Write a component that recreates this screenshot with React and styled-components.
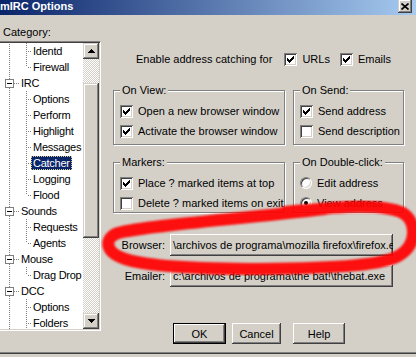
import React from "react";
import styled, { createGlobalStyle, css } from "styled-components";

const Global = createGlobalStyle`
  html, body { margin: 0; padding: 0; background: #d4d0c8; }
  body { font-family: "Liberation Sans", Arial, sans-serif; font-size: 11px; color: #000; }
  * { box-sizing: border-box; }
`;

const raised = css`
  background: #d4d0c8;
  box-shadow: inset -1px -1px #404040, inset 1px 1px #ffffff, inset -2px -2px #808080, inset 2px 2px #d4d0c8;
`;

const Window = styled.div`
  position: relative;
  width: 416px;
  height: 357px;
  background: #d4d0c8;
  display: flex;
  flex-direction: column;
  overflow: hidden;
`;

const TitleBar = styled.div`
  height: 15px;
  flex: none;
  display: flex;
  align-items: flex-start;
  justify-content: space-between;
  background: linear-gradient(to right, #0a246a, #a6caf0);
`;

const TitleText = styled.span`
  color: #fff;
  font-weight: bold;
  font-size: 11px;
  line-height: 13px;
`;

const CloseButton = styled.span`
  width: 14px;
  height: 14px;
  margin-top: -1px;
  margin-right: 4px;
  display: flex;
  align-items: center;
  justify-content: center;
  background: #d4d0c8;
  box-shadow: inset -1px -1px #404040, inset 1px 1px #d4d0c8, inset -2px -2px #808080, inset 2px 2px #ffffff;
`;

const Body = styled.div`
  flex: 1;
  display: flex;
  min-height: 0;
`;

const LeftPane = styled.div`
  width: 101px;
  flex: none;
  padding-top: 11px;
  display: flex;
  flex-direction: column;
`;

const CategoryLabel = styled.div`
  line-height: 13px;
  padding-left: 3px;
  margin-bottom: 2px;
`;

const TreeFrame = styled.div`
  margin-left: -2px;
  width: 103px;
  height: 290px;
  display: flex;
  border: 1px solid;
  border-color: #808080 #ffffff #ffffff #808080;
  padding: 1px;
  background: #d4d0c8;
  box-shadow: inset 1px 1px #404040, inset -1px -1px #d4d0c8;
`;

const TreeList = styled.div`
  flex: 1;
  overflow: hidden;
  letter-spacing: -0.25px;
  background: linear-gradient(#808080 50%, transparent 50%) 9px 1px / 1px 2px repeat-y, #ffffff;
`;

const Row = styled.div`
  display: flex;
  align-items: center;
  height: 16px;
`;

const Expander = styled.span`
  width: 9px;
  height: 9px;
  margin-left: 5px;
  flex: none;
  border: 1px solid #808080;
  background: #fff;
  display: flex;
  align-items: center;
  justify-content: center;
`;

const Minus = styled.span`
  width: 5px;
  height: 1px;
  background: #000;
`;

const Dash = styled.span`
  width: 5px;
  flex: none;
  height: 1px;
  background: linear-gradient(to right, #808080 50%, transparent 50%) 0 0 / 2px 1px repeat-x;
`;

const Branch = styled.span`
  position: relative;
  width: 5px;
  height: 16px;
  margin-left: 26px;
  flex: none;
  &::before {
    content: "";
    position: absolute;
    left: 0;
    top: 0;
    width: 1px;
    height: ${(p) => (p.$last ? 8 : 16)}px;
    background: linear-gradient(#808080 50%, transparent 50%) 0 0 / 1px 2px repeat-y;
  }
  &::after {
    content: "";
    position: absolute;
    left: 1px;
    top: 8px;
    width: 4px;
    height: 1px;
    background: linear-gradient(to right, transparent 50%, #808080 50%) 0 0 / 2px 1px repeat-x;
  }
`;

const NodeLabel = styled.span`
  height: 14px;
  line-height: 14px;
  padding: 0 2px;
  white-space: nowrap;
  ${(p) =>
    p.$selected &&
    css`
      background: #0a246a;
      color: #fff;
      outline: 1px dotted #d8cc90;
      outline-offset: -1px;
    `}
`;

const ScrollBar = styled.div`
  width: 16px;
  flex: none;
  display: flex;
  flex-direction: column;
  background: repeating-conic-gradient(#d4d0c8 0 25%, #ffffff 0 50%) 0 0 / 2px 2px;
`;

const ScrollButton = styled.div`
  width: 16px;
  height: ${(p) => p.$h || 16}px;
  flex: none;
  display: flex;
  align-items: center;
  justify-content: center;
  background: #d4d0c8;
  box-shadow: inset -1px -1px #404040, inset 1px 1px #d4d0c8, inset -2px -2px #808080, inset 2px 2px #ffffff;
`;

const Track = styled.div`
  flex: 1;
  padding-top: 24px;
`;

const RightPane = styled.div`
  flex: 1;
  padding: 36px 0 0 12px;
  display: flex;
  flex-direction: column;
`;

const EnableRow = styled.div`
  display: flex;
  align-items: center;
  height: 16px;
  margin-left: 23px;
  gap: 10px;
`;

const EnableText = styled.span`
  margin-right: 2px;
  white-space: nowrap;
`;

const Option = styled.label`
  display: flex;
  align-items: center;
  gap: 5px;
  height: 16px;
  white-space: nowrap;
`;

const CheckBox = styled.span`
  width: 13px;
  height: 13px;
  flex: none;
  display: flex;
  background: #fff;
  box-shadow: inset 1px 1px #808080, inset -1px -1px #ffffff, inset 2px 2px #404040, inset -2px -2px #d4d0c8;
`;

const Radio = styled.span`
  width: 12px;
  height: 12px;
  flex: none;
  border-radius: 50%;
  background: #fff;
  border: 1px solid;
  border-color: #808080 #ffffff #ffffff #808080;
  box-shadow: inset 1px 1px #404040, inset -1px -1px #d4d0c8;
  display: flex;
  align-items: center;
  justify-content: center;
`;

const Dot = styled.span`
  width: 4px;
  height: 4px;
  border-radius: 50%;
  background: #000;
`;

const GroupGrid = styled.div`
  display: grid;
  grid-template-columns: 172px 111px;
  column-gap: 8px;
  row-gap: 11px;
  margin-top: 17px;
`;

const Group = styled.fieldset`
  margin: 0;
  min-width: 0;
  border: 1px solid #808080;
  box-shadow: 1px 1px 0 #ffffff, inset 1px 1px 0 #ffffff;
  padding: 6px 6px ${(p) => p.$pb}px;
  display: flex;
  flex-direction: column;
  gap: 4px;
`;

const Caption = styled.legend`
  padding: 0 2px;
  line-height: 13px;
  background: #d4d0c8;
`;

const PathGrid = styled.div`
  display: grid;
  grid-template-columns: 52px 223px;
  column-gap: 5px;
  row-gap: 9px;
  margin-top: 21px;
  align-items: center;
`;

const PathLabel = styled.span`
  text-align: right;
  white-space: nowrap;
`;

const PathField = styled.div`
  height: 22px;
  line-height: 22px;
  padding: 0 3px;
  white-space: nowrap;
  overflow: hidden;
  ${raised};
`;

const ButtonRow = styled.div`
  display: flex;
  margin-top: 36px;
  padding-left: 60px;
`;

const Button = styled.button`
  width: ${(p) => p.$w}px;
  height: 21px;
  margin: 0 0 0 ${(p) => p.$ml || 0}px;
  padding: 0;
  font: inherit;
  color: #000;
  border: none;
  ${raised};
  ${(p) =>
    p.$default &&
    css`
      border: 1px solid #000;
      box-shadow: inset -1px -1px #404040, inset 1px 1px #ffffff, inset -2px -2px #808080;
    `}
`;

const WindowEdge = styled.div`
  height: 5px;
  flex: none;
  border-top: 1px solid #808080;
  box-shadow: inset 0 1px #404040;
`;

const Scribble = styled.svg`
  position: absolute;
  left: 0;
  top: 0;
  pointer-events: none;
`;

const Check = () => {
  const tops = [5, 6, 7, 6, 5, 4, 3];
  const d = tops.map((y, i) => `M${3 + i} ${y}h1v3h-1z`).join("");
  return (
    <svg width="13" height="13" viewBox="0 0 13 13" shapeRendering="crispEdges">
      <path d={d} fill="#000" />
    </svg>
  );
};

const CheckOption = ({ checked, children }) => (
  <Option>
    <CheckBox>{checked && <Check />}</CheckBox>
    {children}
  </Option>
);

const RadioOption = ({ checked, children }) => (
  <Option>
    <Radio>{checked && <Dot />}</Radio>
    {children}
  </Option>
);

const Arrow = ({ down }) => (
  <svg width="7" height="4" viewBox="0 0 7 4" shapeRendering="crispEdges">
    <path d={down ? "M0 0h7L3.5 4z" : "M3.5 0L7 4H0z"} fill="#000" />
  </svg>
);

const tree = [
  { label: "Identd", level: 1 },
  { label: "Firewall", level: 1, last: true },
  { label: "IRC", level: 0 },
  { label: "Options", level: 1 },
  { label: "Perform", level: 1 },
  { label: "Highlight", level: 1 },
  { label: "Messages", level: 1 },
  { label: "Catcher", level: 1, selected: true },
  { label: "Logging", level: 1 },
  { label: "Flood", level: 1, last: true },
  { label: "Sounds", level: 0 },
  { label: "Requests", level: 1 },
  { label: "Agents", level: 1, last: true },
  { label: "Mouse", level: 0 },
  { label: "Drag Drop", level: 1, last: true },
  { label: "DCC", level: 0 },
  { label: "Options", level: 1 },
  { label: "Folders", level: 1 },
];

export default function App() {
  return (
    <>
      <Global />
      <Window>
        <TitleBar>
          <TitleText>mIRC Options</TitleText>
          <CloseButton>
            <svg width="8" height="7" viewBox="0 0 8 7">
              <path d="M0.5 0.5L7.5 6.5M7.5 0.5L0.5 6.5" stroke="#000" strokeWidth="1.6" />
            </svg>
          </CloseButton>
        </TitleBar>
        <Body>
          <LeftPane>
            <CategoryLabel>Category:</CategoryLabel>
            <TreeFrame>
              <TreeList>
                {tree.map((n, i) =>
                  n.level === 0 ? (
                    <Row key={i}>
                      <Expander>
                        <Minus />
                      </Expander>
                      <Dash />
                      <NodeLabel>{n.label}</NodeLabel>
                    </Row>
                  ) : (
                    <Row key={i}>
                      <Branch $last={n.last} />
                      <NodeLabel $selected={n.selected}>{n.label}</NodeLabel>
                    </Row>
                  )
                )}
              </TreeList>
              <ScrollBar>
                <ScrollButton>
                  <Arrow />
                </ScrollButton>
                <Track>
                  <ScrollButton $h={155} />
                </Track>
                <ScrollButton>
                  <Arrow down />
                </ScrollButton>
              </ScrollBar>
            </TreeFrame>
          </LeftPane>
          <RightPane>
            <EnableRow>
              <EnableText>Enable address catching for</EnableText>
              <CheckOption checked>URLs</CheckOption>
              <CheckOption checked>Emails</CheckOption>
            </EnableRow>
            <GroupGrid>
              <Group $pb={5}>
                <Caption>On View:</Caption>
                <CheckOption checked>Open a new browser window</CheckOption>
                <CheckOption checked>Activate the browser window</CheckOption>
              </Group>
              <Group $pb={5}>
                <Caption>On Send:</Caption>
                <CheckOption checked>Send address</CheckOption>
                <CheckOption>Send description</CheckOption>
              </Group>
              <Group $pb={1}>
                <Caption>Markers:</Caption>
                <CheckOption checked>Place ? marked items at top</CheckOption>
                <CheckOption>Delete ? marked items on exit</CheckOption>
              </Group>
              <Group $pb={1}>
                <Caption>On Double-click:</Caption>
                <RadioOption>Edit address</RadioOption>
                <RadioOption checked>View address</RadioOption>
              </Group>
            </GroupGrid>
            <PathGrid>
              <PathLabel>Browser:</PathLabel>
              <PathField>\archivos de programa\mozilla firefox\firefox.exe</PathField>
              <PathLabel>Emailer:</PathLabel>
              <PathField>c:\archivos de programa\the bat!\thebat.exe</PathField>
            </PathGrid>
            <ButtonRow>
              <Button $w={53} $default>OK</Button>
              <Button $w={49} $ml={6}>Cancel</Button>
              <Button $w={52} $ml={12}>Help</Button>
            </ButtonRow>
          </RightPane>
        </Body>
        <WindowEdge />
        <Scribble width="416" height="357" viewBox="0 0 416 357">
          <defs>
            <filter id="soft" x="-10%" y="-10%" width="120%" height="120%">
              <feGaussianBlur stdDeviation="1.2" />
            </filter>
          </defs>
          <path
            d="M 285 212 C 330 208, 380 202, 403 213 C 417 222, 417 244, 400 255 C 385 265, 340 268, 260 269 C 200 269, 150 267, 125 259 C 104 252, 104 238, 118 233 C 150 225, 230 220, 325 209"
            fill="none"
            stroke="#ff0000"
            strokeOpacity="0.93"
            strokeWidth="12"
            strokeLinecap="round"
            filter="url(#soft)"
          />
        </Scribble>
      </Window>
    </>
  );
}
